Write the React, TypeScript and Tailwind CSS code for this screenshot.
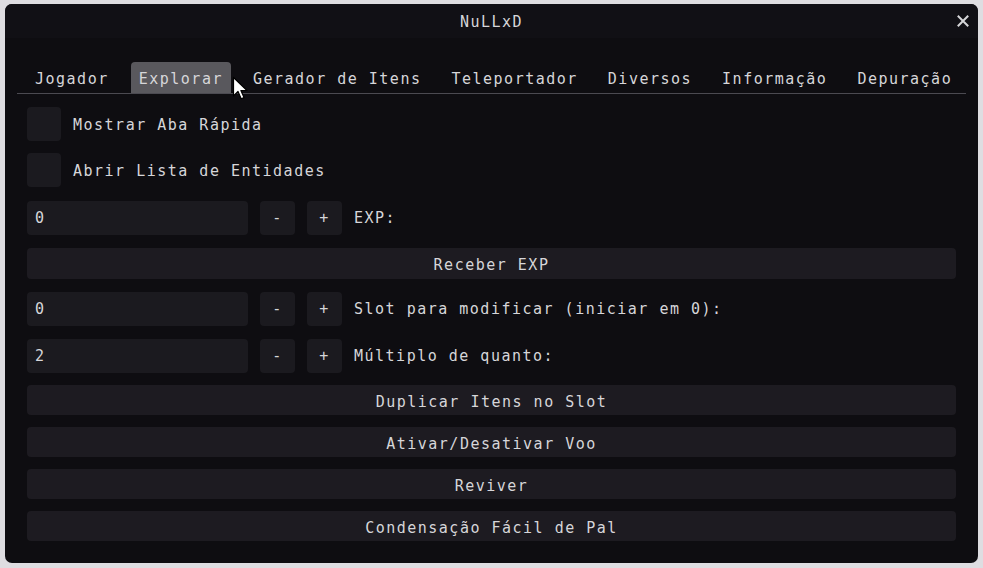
import { useState } from 'react'

const TABS = ['Jogador', 'Explorar', 'Gerador de Itens', 'Teleportador', 'Diversos', 'Informação', 'Depuração']

const mono = "font-['DejaVu_Sans_Mono','Liberation_Mono',monospace] text-[15px] tracking-[1.5px]"

function Checkbox({ label }: { label: string }) {
  const [on, setOn] = useState(false)
  return (
    <div className="flex h-[34px] items-center gap-[12px]">
      <button
        onClick={() => setOn(!on)}
        className="flex h-[34px] w-[34px] items-center justify-center rounded-[4px] bg-[#1b1a1f]"
      >
        {on && <span className="h-[16px] w-[16px] rounded-[2px] bg-[#c9c9cd]" />}
      </button>
      <span className="pt-[3px]">{label}</span>
    </div>
  )
}

function Stepper({ value, label }: { value: number; label: string }) {
  const [v, setV] = useState(value)
  return (
    <div className="flex h-[34px] items-center">
      <div className="flex h-full w-[221px] items-center rounded-[4px] bg-[#1b1a1f] px-[8px] pt-[1px]">{v}</div>
      <button
        onClick={() => setV(v - 1)}
        className="ml-[12px] flex h-full w-[35px] items-center justify-center rounded-[4px] bg-[#1b1a1f] pt-[1px]"
      >
        -
      </button>
      <button
        onClick={() => setV(v + 1)}
        className="ml-[12px] flex h-full w-[35px] items-center justify-center rounded-[4px] bg-[#1b1a1f] pt-[1px]"
      >
        +
      </button>
      <span className="ml-[12px] pt-[1px]">{label}</span>
    </div>
  )
}

function Action({ label, h = 'h-[30px]' }: { label: string; h?: string }) {
  return (
    <button className={`flex w-full items-center justify-center rounded-[4px] bg-[#1d1b21] pt-[4px] ${h}`}>
      {label}
    </button>
  )
}

export default function App() {
  const [tab, setTab] = useState(1)

  return (
    <div className="h-[568px] w-[983px] bg-[#dedde1] pl-[5px] pt-[4px]">
      <div className={`relative h-[559px] w-[973px] overflow-hidden rounded-[7px] bg-[#0e0d11] text-[#d6d6d9] ${mono}`}>
        {/* barra de título */}
        <div className="relative flex h-[34px] items-center justify-center bg-[#111015]">
          <span className="pt-[2px]">NuLLxD</span>
          <svg className="absolute right-[9px] top-[11px]" width="12" height="12" viewBox="0 0 12 12">
            <path d="M1.5 1.5 L10.5 10.5 M10.5 1.5 L1.5 10.5" stroke="#d6d6d9" strokeWidth="2" strokeLinecap="square" />
          </svg>
        </div>

        {/* abas */}
        <div className="mx-[12px] mt-[24px] border-b border-[#4b4a51]">
          <div className="flex gap-[14px] pl-[10px]">
            {TABS.map((t, i) => (
              <button
                key={t}
                onClick={() => setTab(i)}
                className={`flex h-[31px] items-center rounded-t-[4px] px-[8px] pt-[3px] ${i === tab ? 'bg-[#59585d]' : ''}`}
              >
                {t}
              </button>
            ))}
          </div>
        </div>

        <div className="flex flex-col px-[22px] pt-[13px]">
          <div className="flex flex-col gap-[12px]">
            <Checkbox label="Mostrar Aba Rápida" />
            <Checkbox label="Abrir Lista de Entidades" />
          </div>
          <div className="mt-[14px] flex flex-col gap-[13px]">
            <Stepper value={0} label="EXP:" />
            <Action label="Receber EXP" h="h-[31px]" />
            <Stepper value={0} label="Slot para modificar (iniciar em 0):" />
            <Stepper value={2} label="Múltiplo de quanto:" />
          </div>
          <div className="mt-[12px] flex flex-col gap-[12px]">
            <Action label="Duplicar Itens no Slot" />
            <Action label="Ativar/Desativar Voo" />
            <Action label="Reviver" />
            <Action label="Condensação Fácil de Pal" />
          </div>
        </div>

        {/* ponteiro do mouse */}
        <svg className="absolute left-[227px] top-[72px]" width="18" height="26" viewBox="0 0 18 26">
          <path
            d="M1.5 1.5 L1.5 20 L6 15.5 L9.2 22.8 L12 21.6 L8.9 14.5 L15 14.5 Z"
            fill="#ffffff"
            stroke="#000000"
            strokeWidth="1.2"
            strokeLinejoin="round"
          />
        </svg>
      </div>
    </div>
  )
}
